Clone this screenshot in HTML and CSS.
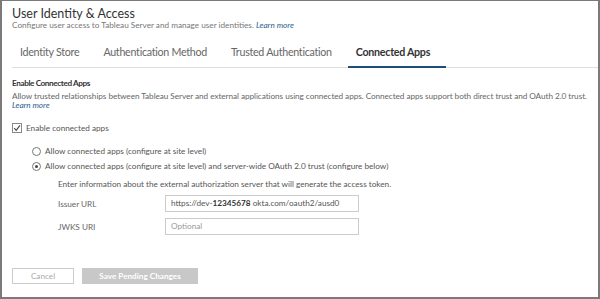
FILE: index.html
```html
<!DOCTYPE html>
<html>
<head>
<meta charset="utf-8">
<link rel="stylesheet" href="styles.css">
</head>
<body>
<div class="frame">
  <header class="head">
    <h1 class="title">User Identity &amp; Access</h1>
    <p class="subtitle">Configure user access to Tableau Server and manage user identities. <a class="link">Learn more</a></p>
  </header>
  <nav class="tabs">
    <span class="tab">Identity Store</span>
    <span class="tab">Authentication Method</span>
    <span class="tab">Trusted Authentication</span>
    <span class="tab active">Connected Apps</span>
  </nav>
  <section class="section">
    <h2 class="heading">Enable Connected Apps</h2>
    <p class="desc">Allow trusted relationships between Tableau Server and external applications using connected apps. Connected apps support both direct trust and OAuth 2.0 trust.<br><a class="link">Learn more</a></p>
    <label class="check-row"><span class="checkbox"><svg width="8" height="8" viewBox="0 0 8 8"><path d="M1.2 4.2 L3.2 6.3 L6.9 1.4" fill="none" stroke="#444" stroke-width="1.1"/></svg></span>Enable connected apps</label>
    <div class="radios">
      <label class="radio-row"><span class="radio"></span>Allow connected apps (configure at site level)</label>
      <label class="radio-row"><span class="radio on"></span>Allow connected apps (configure at site level) and server-wide OAuth 2.0 trust (configure below)</label>
    </div>
    <div class="oauth">
      <p class="info">Enter information about the external authorization server that will generate the access token.</p>
      <div class="field">
        <span class="flabel">Issuer URL</span>
        <span class="input">https://dev-<b class="num">12345678</b> okta.com/oauth2/ausd0</span>
      </div>
      <div class="field">
        <span class="flabel">JWKS URI</span>
        <span class="input ph">Optional</span>
      </div>
    </div>
  </section>
  <footer class="actions">
    <span class="btn cancel">Cancel</span>
    <span class="btn save">Save Pending Changes</span>
  </footer>
</div>
</body>
</html>
```
FILE: styles.css
```css
html, body { margin: 0; padding: 0; background: #fff; }
body { font-family: Lato, "Open Sans", sans-serif; color: #333; }
.frame {
  width: 600px; height: 299px; box-sizing: border-box;
  border: 2px solid #7a7a7a; border-top-width: 1px;
  padding: 0 0 0 10px; display: flex; flex-direction: column;
}
.head { padding-top: 5px; }
.title { margin: 0; font-size: 12.5px; font-weight: 400; line-height: 15px; color: #333; }
.subtitle { margin: 0; font-size: 8.2px; line-height: 9px; color: #777; }
.link { color: #2c5d8f; font-style: italic; }
.tabs {
  display: flex; margin-top: 10px; border-bottom: 1px solid #ddd;
  height: 27px;
}
.tab {
  font-size: 10.7px; letter-spacing: -0.28px; color: #666; padding: 0 8px; margin-right: 8px;
  line-height: 24px; border-bottom: 2px solid transparent; height: 28px; box-sizing: border-box;
  margin-bottom: -1px;
}
.tab.active { color: #333; font-weight: 700; border-bottom-color: #1f4e7a; padding-right: 16px; }
.section { padding-top: 10px; }
.heading { margin: 0; font-size: 8.2px; letter-spacing: -0.4px; font-weight: 700; line-height: 10px; color: #333; }
.desc { margin: 4px 0 0; font-size: 8.2px; letter-spacing: -0.05px; line-height: 9px; color: #666; }
.check-row { display: flex; align-items: center; margin-top: 12px; font-size: 8.2px; color: #555; height: 12px; }
.checkbox {
  width: 8px; height: 8px; border: 1px solid #888; margin-right: 4px;
  display: flex; align-items: center; justify-content: center;
}
.radios { margin-top: 11px; padding-left: 20px; display: flex; flex-direction: column; gap: 3px; }
.radio-row { display: flex; align-items: center; font-size: 8.2px; color: #555; height: 12px; }
.radio {
  width: 7px; height: 7px; border: 1px solid #777; border-radius: 50%; margin-right: 4px;
  display: flex; align-items: center; justify-content: center;
}
.radio.on::after { content: ""; width: 3px; height: 3px; border-radius: 50%; background: #444; }
.oauth { padding-left: 46px; margin-top: 6px; }
.info { margin: 0; font-size: 8.2px; line-height: 12px; color: #555; }
.field { display: flex; align-items: center; margin-top: 5px; }
.field + .field { margin-top: 6px; }
.flabel { width: 107px; font-size: 8.2px; color: #666; }
.input {
  width: 194px; height: 17px; box-sizing: border-box; border: 1px solid #ccc;
  font-size: 8.2px; color: #555; padding-left: 5px; line-height: 15px;
}
.num { color: #333; font-weight: 700; }
.input.ph { color: #999; }
.actions { margin-top: auto; margin-bottom: 13px; display: flex; gap: 8px; }
.btn {
  height: 16px; box-sizing: border-box; font-size: 8.2px; line-height: 14px;
  text-align: center; border: 1px solid #ccc;
}
.cancel { width: 62px; color: #aaa; background: #fff; }
.save { width: 116px; color: #fff; background: #c8c8c8; border-color: #c8c8c8; font-weight: 700; }
```
